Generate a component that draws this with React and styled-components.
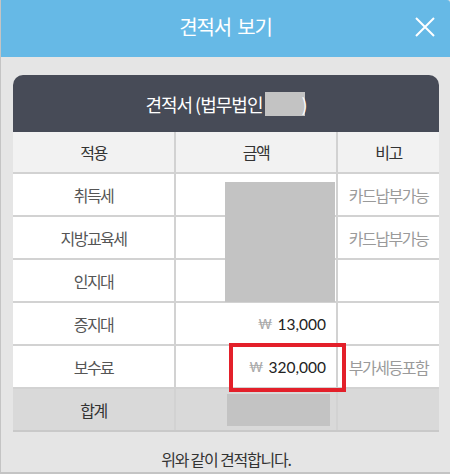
import React from "react";
import styled, { createGlobalStyle } from "styled-components";

const GlobalStyle = createGlobalStyle`
    html, body {
        margin: 0;
        padding: 0;
        background: #e5e5e5;
    }
    body {
        font-family: "Noto Sans CJK KR", "Noto Sans", sans-serif;
    }
`;

const Modal = styled.div`
    width: 450px;
    height: 474px;
    box-sizing: border-box;
    border-left: 1px solid #c4c4c4;
    border-bottom: 2px solid #c4c4c4;
    background: #e5e5e5;
    display: flex;
    flex-direction: column;
`;

const Header = styled.header`
    position: relative;
    height: 57px;
    flex-shrink: 0;
    display: flex;
    align-items: center;
    justify-content: center;
    background: #66b9e6;
    border-top-right-radius: 3px;
    color: #fff;
    font-size: 20px;
    letter-spacing: -1.2px;
    word-spacing: 3px;
    padding-bottom: 4px;
    box-sizing: border-box;
`;

const Close = styled.button`
    position: absolute;
    right: 15px;
    top: 17px;
    width: 20px;
    height: 20px;
    padding: 0;
    border: 0;
    background: none;
    cursor: pointer;
`;

const Body = styled.div`
    flex: 1;
    padding: 18px 11px 0 12px;
    display: flex;
    flex-direction: column;
`;

const Card = styled.section`
    border-radius: 10px 10px 0 0;
    overflow: hidden;
    border-bottom: 2px solid #c9c9c9;
`;

const CardTitle = styled.h2`
    margin: 0;
    height: 57px;
    display: flex;
    align-items: center;
    justify-content: center;
    background: #474b57;
    color: #fff;
    font-size: 18px;
    font-weight: 400;
    letter-spacing: -1px;
    padding-top: 1px;
    box-sizing: border-box;
`;

const Redact = styled.span`
    display: inline-block;
    width: ${(p) => p.$w}px;
    height: ${(p) => p.$h}px;
    background: #c3c3c3;
`;

const Paren = styled.span`
    margin-left: -4px;
    color: #fff;
`;

const Table = styled.div`
    position: relative;
    display: grid;
    grid-template-columns: 161px 160px 101px;
    grid-template-rows: 40px repeat(6, 41px);
    gap: 2px;
    background: #d2d2d2;
`;

const Cell = styled.div`
    display: flex;
    align-items: center;
    justify-content: ${(p) => (p.$align === "right" ? "flex-end" : "center")};
    padding-right: ${(p) => (p.$align === "right" ? "10px" : "0")};
    background: ${(p) =>
        p.$head ? "#f2f2f2" : p.$total ? "#d9d9d9" : "#fff"};
    color: ${(p) => (p.$muted ? "#9a9a9a" : p.$head || p.$total ? "#333" : "#555")};
    font-size: 16px;
    letter-spacing: -1.5px;
    white-space: nowrap;
`;

const Won = styled.span`
    color: #a8a8a8;
    font-family: "Lato", "Noto Sans", sans-serif;
    font-size: 14px;
    letter-spacing: 0;
    margin-right: 5px;
`;

const Amount = styled.span`
    color: #222;
    font-family: "Lato", "Noto Sans", sans-serif;
    font-size: 15.5px;
    letter-spacing: 0;
`;

const TotalRedact = styled(Redact)`
    margin-right: -4px;
    margin-top: 1px;
`;

const Cover = styled.div`
    position: absolute;
    left: 212px;
    top: 50px;
    width: 110px;
    height: 120px;
    background: #c3c3c3;
`;

const Highlight = styled.div`
    position: absolute;
    left: 216px;
    top: 211px;
    width: 117px;
    height: 49px;
    box-sizing: border-box;
    border: 4px solid #e3202a;
`;

const Footer = styled.p`
    margin: 0;
    flex: 1;
    display: flex;
    align-items: center;
    justify-content: center;
    padding-top: 14px;
    color: #333;
    font-size: 16px;
    letter-spacing: -1.2px;
`;

const rows = [
    { label: "취득세", note: "카드납부가능" },
    { label: "지방교육세", note: "카드납부가능" },
    { label: "인지대" },
    { label: "증지대", amount: "13,000" },
    { label: "보수료", amount: "320,000", note: "부가세등포함" },
];

function CloseIcon() {
    return (
        <svg width="20" height="20" viewBox="0 0 20 20">
            <path d="M1 1 L19 19 M19 1 L1 19" stroke="#fff" strokeWidth="2" fill="none" />
        </svg>
    );
}

export default function App() {
    return (
        <>
            <GlobalStyle />
            <Modal>
                <Header>
                    견적서 보기
                    <Close aria-label="닫기">
                        <CloseIcon />
                    </Close>
                </Header>
                <Body>
                    <Card>
                        <CardTitle>
                            견적서 (법무법인&nbsp;
                            <Redact $w={40} $h={24} />
                            <Paren>)</Paren>
                        </CardTitle>
                        <Table>
                            <Cell $head>적용</Cell>
                            <Cell $head>금액</Cell>
                            <Cell $head>비고</Cell>
                            {rows.map((r) => (
                                <React.Fragment key={r.label}>
                                    <Cell>{r.label}</Cell>
                                    <Cell $align="right">
                                        {r.amount && (
                                            <>
                                                <Won>₩</Won>
                                                <Amount>{r.amount}</Amount>
                                            </>
                                        )}
                                    </Cell>
                                    <Cell $muted>{r.note}</Cell>
                                </React.Fragment>
                            ))}
                            <Cell $total>합계</Cell>
                            <Cell $total $align="right">
                                <TotalRedact $w={103} $h={32} />
                            </Cell>
                            <Cell $total />
                            <Cover />
                            <Highlight />
                        </Table>
                    </Card>
                    <Footer>위와 같이 견적합니다.</Footer>
                </Body>
            </Modal>
        </>
    );
}
